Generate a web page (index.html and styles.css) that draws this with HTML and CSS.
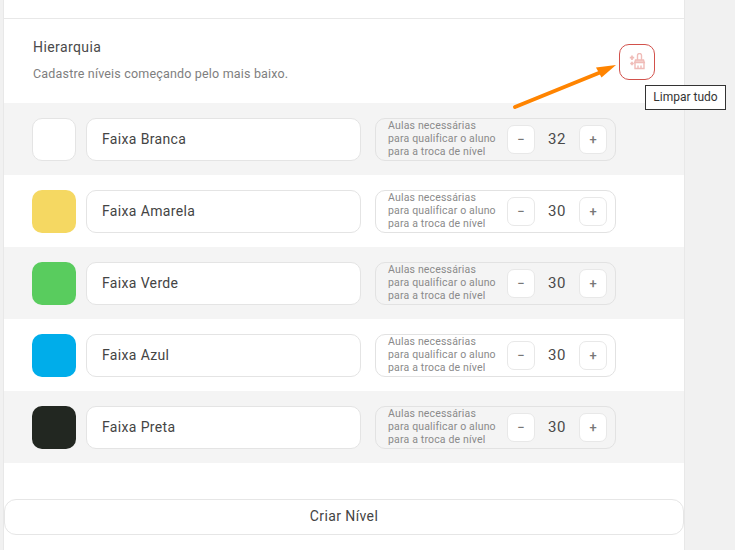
FILE: index.html
```html
<!DOCTYPE html>
<html lang="pt-BR">
<head>
<meta charset="utf-8">
<title>Hierarquia</title>
<link rel="stylesheet" href="styles.css">
</head>
<body>
<main class="panel">
  <div class="top-strip"></div>
  <header class="head">
    <div class="head-text">
      <h2 class="title">Hierarquia</h2>
      <p class="subtitle">Cadastre níveis começando pelo mais baixo.</p>
    </div>
    <button class="clear-btn" aria-label="Limpar tudo">
      <svg width="18" height="18" viewBox="0 0 18 18" fill="none" stroke="#f0bcb8" stroke-width="1.400">
        <path d="M9.500 7V2.500a2 2 0 0 1 4 0V7"/>
        <path d="M7.500 7h8l.8 2.500H6.700z" fill="#f6d4d1"/>
        <path d="M7 9.500v6h9v-6"/>
        <path d="M10 15.500v-3M13 15.500v-3"/>
        <path d="M4 2.500v4.400M1.800 4.700h4.400M4 8.700v3.600M2.200 10.500h3.600" stroke-width="1.700"/>
      </svg>
    </button>
  </header>
  <section class="rows">
    <div class="row">
      <div class="swatch white"></div>
      <div class="name">Faixa Branca</div>
      <div class="counter">
        <div class="hint">Aulas necessárias<br>para qualificar o aluno<br>para a troca de nível</div>
        <button class="step">−</button><span class="value">32</span><button class="step">+</button>
      </div>
    </div>
    <div class="row">
      <div class="swatch yellow"></div>
      <div class="name">Faixa Amarela</div>
      <div class="counter">
        <div class="hint">Aulas necessárias<br>para qualificar o aluno<br>para a troca de nível</div>
        <button class="step">−</button><span class="value">30</span><button class="step">+</button>
      </div>
    </div>
    <div class="row">
      <div class="swatch green"></div>
      <div class="name">Faixa Verde</div>
      <div class="counter">
        <div class="hint">Aulas necessárias<br>para qualificar o aluno<br>para a troca de nível</div>
        <button class="step">−</button><span class="value">30</span><button class="step">+</button>
      </div>
    </div>
    <div class="row">
      <div class="swatch blue"></div>
      <div class="name">Faixa Azul</div>
      <div class="counter">
        <div class="hint">Aulas necessárias<br>para qualificar o aluno<br>para a troca de nível</div>
        <button class="step">−</button><span class="value">30</span><button class="step">+</button>
      </div>
    </div>
    <div class="row">
      <div class="swatch black"></div>
      <div class="name">Faixa Preta</div>
      <div class="counter">
        <div class="hint">Aulas necessárias<br>para qualificar o aluno<br>para a troca de nível</div>
        <button class="step">−</button><span class="value">30</span><button class="step">+</button>
      </div>
    </div>
  </section>
  <button class="create">Criar Nível</button>
</main>
<div class="tooltip">Limpar tudo</div>
<svg class="arrow" width="110" height="60" viewBox="0 0 110 60" fill="none">
  <path d="M5 47L90 12.500" stroke="#ff8400" stroke-width="4" stroke-linecap="round"/>
  <path d="M106 5L86 7.500L91.500 17.500z" fill="#ff8400"/>
</svg>
</body>
</html>
```
FILE: styles.css
```css
* { box-sizing: border-box; }
html, body { margin: 0; height: 550px; overflow: hidden; }
body {
  background: #f1f1f1;
  font-family: Roboto, "Liberation Sans", sans-serif;
  color: #444;
  position: relative;
}
.panel {
  width: 682px;
  height: 550px;
  margin-left: 3px;
  background: #fff;
  border-left: 1px solid #e8e8e8;
  border-right: 1px solid #e8e8e8;
  display: flex;
  flex-direction: column;
}
.top-strip { height: 19px; border-bottom: 1px solid #e8e8e8; flex: none; }
.head {
  height: 84px;
  flex: none;
  padding: 19px 29px 0 29px;
  display: flex;
  justify-content: space-between;
  align-items: flex-start;
}
.title { margin: 0; font-size: 14px; line-height: 18px; font-weight: 400; color: #4a4a4a; letter-spacing: .4px; }
.subtitle { margin: 9px 0 0; font-size: 12.500px; line-height: 18px; color: #7e7e7e; letter-spacing: .18px; }
.clear-btn {
  width: 36px;
  height: 36px;
  margin-top: 6px;
  padding: 0;
  background: #fff;
  border: 1px solid #d2514b;
  border-radius: 10px;
  display: flex;
  align-items: center;
  justify-content: center;
}
.rows { flex: none; }
.row {
  height: 72px;
  padding: 15px 0 0 28px;
  display: flex;
  align-items: flex-start;
}
.row:nth-child(odd) { background: #f4f4f4; }
.swatch {
  width: 44px;
  height: 43px;
  border-radius: 10px;
  flex: none;
}
.white { background: #fff; border: 1px solid #e4e4e4; }
.yellow { background: #f5d862; }
.green { background: #59cc5e; }
.blue { background: #00adea; }
.black { background: #222721; }
.name {
  width: 275px;
  height: 43px;
  margin-left: 10px;
  padding-left: 15px;
  background: #fff;
  border: 1px solid #e4e4e4;
  border-radius: 10px;
  font-size: 14px;
  font-weight: 400;
  line-height: 41px;
  letter-spacing: .35px;
  color: #444;
  flex: none;
}
.counter {
  width: 241px;
  height: 43px;
  margin-left: 14px;
  padding: 0 0 2px 12px;
  border: 1px solid #e2e2e2;
  border-radius: 10px;
  display: flex;
  align-items: center;
  flex: none;
}
.hint {
  width: 119px;
  font-size: 10.500px;
  line-height: 13px;
  color: #8a8a8a;
  letter-spacing: .17px;
  flex: none;
}
.step {
  width: 28px;
  height: 29px;
  padding: 0;
  background: #fff;
  border: 1px solid #e8e8e8;
  border-radius: 7px;
  font: 500 13px/27px Roboto, "Liberation Sans", sans-serif;
  color: #777;
  flex: none;
  position: relative;
  top: 1px;
}
.value {
  width: 44px;
  text-align: center;
  font-size: 15px;
  letter-spacing: .6px;
  color: #4a4a4a;
  flex: none;
}
.create {
  width: 680px;
  height: 36px;
  margin-top: 36px;
  background: #fff;
  border: 1px solid #e6e6e6;
  border-radius: 12px;
  font: 400 14px/32px Roboto, "Liberation Sans", sans-serif;
  letter-spacing: .4px;
  color: #444;
  padding: 0 0 2px;
  flex: none;
}
.tooltip {
  position: absolute;
  left: 645px;
  top: 85px;
  width: 81px;
  height: 25px;
  background: #fff;
  border: 1px solid #333;
  font-size: 12px;
  line-height: 23px;
  text-align: center;
  color: #333;
}
.arrow { position: absolute; left: 510px; top: 60px; }
```
